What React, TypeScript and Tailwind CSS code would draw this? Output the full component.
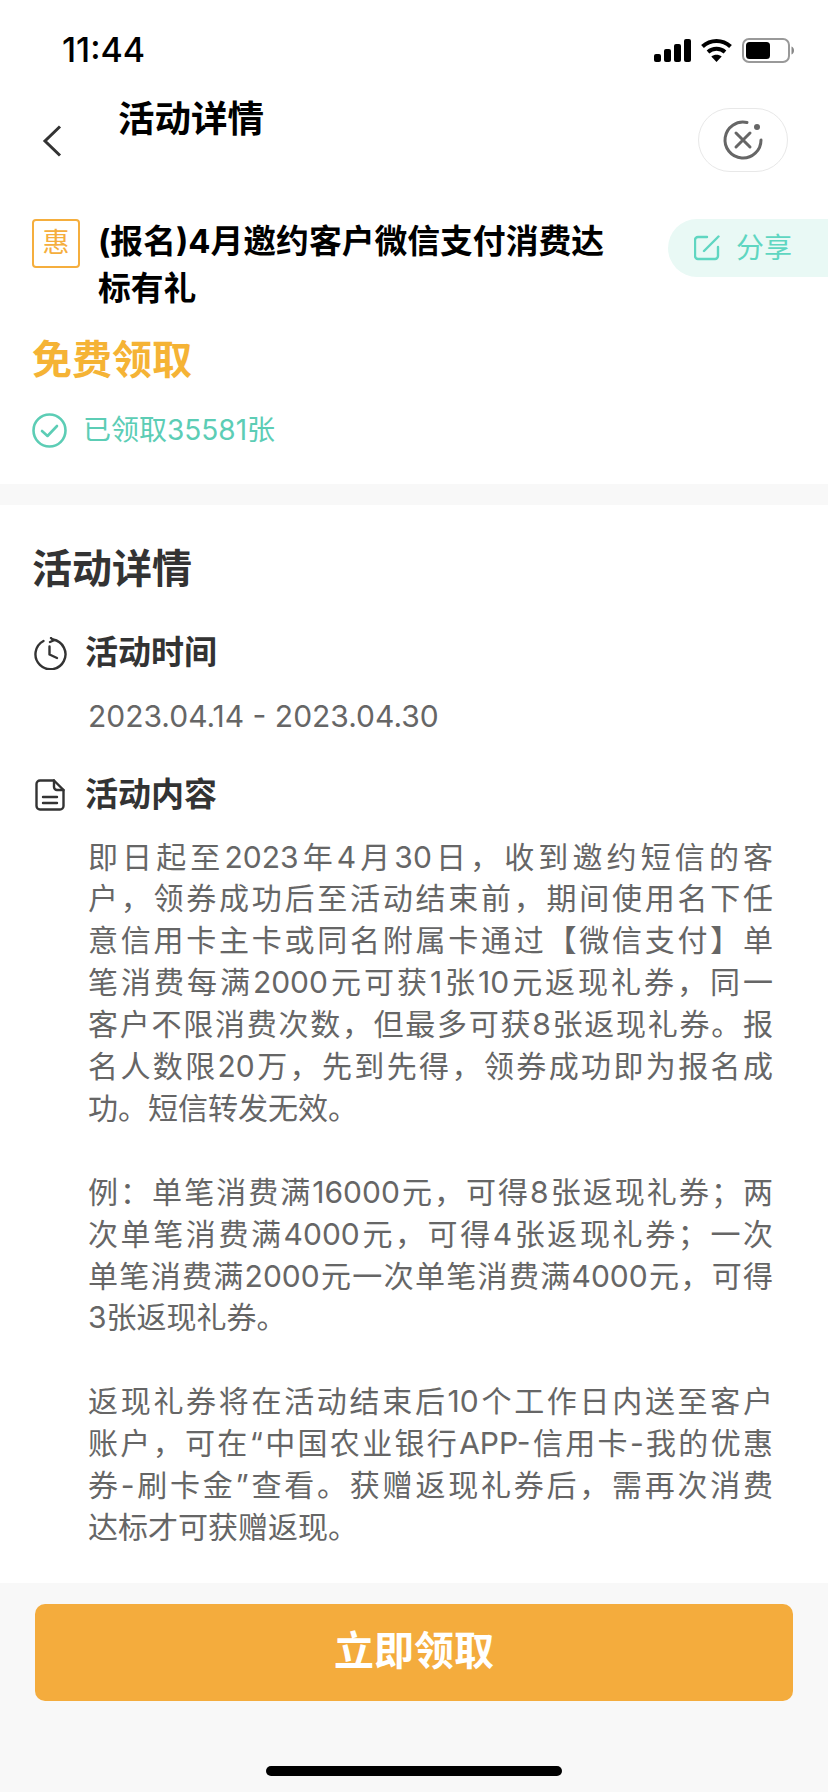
const font = { fontFamily: 'Inter, "Noto Sans CJK SC", sans-serif' }

const paragraphs = [
  [
    "即日起至2023年4月30日，收到邀约短信的客",
    "户，领券成功后至活动结束前，期间使用名下任",
    "意信用卡主卡或同名附属卡通过【微信支付】单",
    "笔消费每满2000元可获1张10元返现礼券，同一",
    "客户不限消费次数，但最多可获8张返现礼券。报",
    "名人数限20万，先到先得，领券成功即为报名成",
    "功。短信转发无效。",
  ],
  [
    "例：单笔消费满16000元，可得8张返现礼券；两",
    "次单笔消费满4000元，可得4张返现礼券；一次",
    "单笔消费满2000元一次单笔消费满4000元，可得",
    "3张返现礼券。",
  ],
  [
    "返现礼券将在活动结束后10个工作日内送至客户",
    "账户，可在“中国农业银行APP-信用卡-我的优惠",
    "券-刷卡金”查看。获赠返现礼券后，需再次消费",
    "达标才可获赠返现。",
  ],
]

function StatusIcons() {
  return (
    <div className="flex items-center gap-[10px]">
      <svg width="37" height="23" viewBox="0 0 37 23" fill="#000">
        <rect x="0" y="15" width="7" height="8" rx="2" />
        <rect x="10" y="10" width="7" height="13" rx="2" />
        <rect x="20" y="5" width="7" height="18" rx="2" />
        <rect x="30" y="0" width="7" height="23" rx="2" />
      </svg>
      <svg width="31" height="24" viewBox="0 0 31 24" fill="none" stroke="#000" strokeWidth="4">
        <path d="M1.5 8.5C9.5 1 21.5 1 29.5 8.5" />
        <path d="M7 14C11.8 9.8 19.2 9.8 24 14" />
        <path d="M15.5 24l-5.2-5.6c3-2.3 7.4-2.3 10.4 0z" fill="#000" stroke="none" />
      </svg>
      <svg width="52" height="25" viewBox="0 0 52 25" fill="none">
        <rect x="1" y="1" width="46" height="23" rx="6" stroke="#999" strokeWidth="2" />
        <rect x="4" y="4" width="24" height="17" rx="3.5" fill="#000" />
        <path d="M49.5 8.5c1.5.5 2.5 2 2.5 4s-1 3.500-2.500 4z" fill="#888" />
      </svg>
    </div>
  )
}

function CloseIcon() {
  return (
    <svg width="42" height="42" viewBox="0 0 42 42" fill="none" stroke="#666" strokeWidth="3" strokeLinecap="round">
      <path d="M25 3.500A18 18 0 1 0 39 21" />
      <path d="M14 14l14 14M28 14L14 28" />
      <circle cx="35" cy="8" r="3" fill="#666" stroke="none" />
    </svg>
  )
}

function ShareIcon() {
  return (
    <svg width="26" height="26" viewBox="0 0 26 26" fill="none" stroke="#5fd6c1" strokeWidth="2.400" strokeLinecap="round" strokeLinejoin="round">
      <path d="M13 2H4a3 3 0 0 0-3 3v16a3 3 0 0 0 3 3h17a3 3 0 0 0 3-3v-9" />
      <path d="M10 16L24.500 1.500" />
    </svg>
  )
}

function CheckIcon() {
  return (
    <svg width="35" height="35" viewBox="0 0 35 35" fill="none" stroke="#5ccdb5" strokeWidth="2.600" strokeLinecap="round" strokeLinejoin="round">
      <circle cx="17.500" cy="17.500" r="16" />
      <path d="M10 18l5.500 5L25 13" />
    </svg>
  )
}

function ClockIcon() {
  return (
    <svg width="33" height="33" viewBox="0 0 33 33" fill="none" stroke="#333" strokeWidth="2.400" strokeLinecap="round" strokeLinejoin="round">
      <path d="M19 2.500A15 15 0 1 1 9.500 4" />
      <path d="M17 1l2.500 2.500L16 5" />
      <path d="M15.500 9.500v8l7.500 3.500" />
    </svg>
  )
}

function DocIcon() {
  return (
    <svg width="30" height="32" viewBox="0 0 30 32" fill="none" stroke="#333" strokeWidth="2.400" strokeLinecap="round" strokeLinejoin="round">
      <path d="M19 1.500H5a3.500 3.500 0 0 0-3.500 3.500v22A3.500 3.500 0 0 0 5 30.500h20a3.500 3.500 0 0 0 3.500-3.500V11z" />
      <path d="M19 1.500V8a3 3 0 0 0 3 3h6.500" />
      <path d="M8 18h14M8 24h14" />
    </svg>
  )
}

export default function App() {
  return (
    <div style={font} className="flex flex-col h-[1792px] w-[828px] overflow-hidden bg-white">
      <div className="flex items-center justify-between pl-[62px] pr-[34px] pt-[15px] h-[85px]">
        <span className="text-[34px] leading-[26px] font-medium text-black">11:44</span>
        <StatusIcons />
      </div>

      <div className="flex items-start justify-between pl-[42px] pr-[40px] h-[134px]">
        <svg className="mt-[40px]" width="20" height="32" viewBox="0 0 20 32" fill="none" stroke="#333" strokeWidth="3">
          <path d="M18 1.500L3 16l15 14.500" />
        </svg>
        <div className="flex-1 pl-[56px] pt-[10px] text-[36.5px] leading-[48px] font-bold text-black">活动详情</div>
        <div className="flex items-center justify-center mt-[23px] w-[90px] h-[64px] rounded-[32px] border border-[#e8e8e8]">
          <CloseIcon />
        </div>
      </div>

      <div className="flex items-start">
        <div className="flex items-center justify-center ml-[32px] w-[48px] h-[49px] rounded-[4px] border-2 border-[#f5ae3d] text-[27px] text-[#f5ae3d]">惠</div>
        <div className="w-[530px] ml-[18px] -mt-[1px] text-[32.8px] leading-[47px] font-bold text-black">(报名)4月邀约客户微信支付消费达标有礼</div>
        <div className="flex items-center gap-[16px] ml-auto pl-[26px] w-[160px] h-[58px] rounded-l-[29px] bg-[#e9f9f5] text-[28px] text-[#5fd6c1]">
          <ShareIcon />
          分享
        </div>
      </div>

      <div className="pl-[32px] mt-[18px] text-[40px] leading-[60px] font-bold text-[#f5b335]">免费领取</div>

      <div className="flex items-center gap-[16px] pl-[32px] mt-[22px] h-[36px] text-[28px] text-[#5ccdb5]">
        <CheckIcon />
        已领取35581张
      </div>

      <div className="mt-[36px] h-[21px] shrink-0 bg-[#f8f8f8]" />

      <div className="flex-1 overflow-hidden px-[32px]">
        <div className="mt-[39px] text-[40px] leading-[50px] font-bold text-[#333]">活动详情</div>

        <div className="flex items-center gap-[18px] mt-[37px] pl-[2px] h-[44px] text-[33px] font-bold text-[#333]">
          <ClockIcon />
          活动时间
        </div>
        <div className="mt-[20px] pl-[56px] text-[30px] leading-[42px] text-[#666]">2023.04.14 - 2023.04.30</div>

        <div className="flex items-center gap-[20px] mt-[36px] pl-[3px] h-[44px] text-[33px] font-bold text-[#333]">
          <DocIcon />
          活动内容
        </div>

        <div className="flex flex-col gap-[41.9px] mt-[19.500px] pl-[56px] pr-[23px] text-[30px] leading-[41.9px] text-[#666]">
          {paragraphs.map((lines, i) => (
            <div key={i}>
              {lines.map((line, j) => (
                <div key={j} className={j < lines.length - 1 ? "[text-align-last:justify]" : ""}>{line}</div>
              ))}
            </div>
          ))}
        </div>
      </div>

      <div className="flex flex-col items-center shrink-0 h-[209px] bg-[#f8f8f8]">
        <button className="mt-[21px] pb-[4px] w-[758px] h-[97px] rounded-[10px] bg-[#f4ac3d] text-[40px] font-bold text-white">立即领取</button>
        <div className="mt-[65px] w-[296px] h-[10px] rounded-full bg-black" />
      </div>
    </div>
  )
}
